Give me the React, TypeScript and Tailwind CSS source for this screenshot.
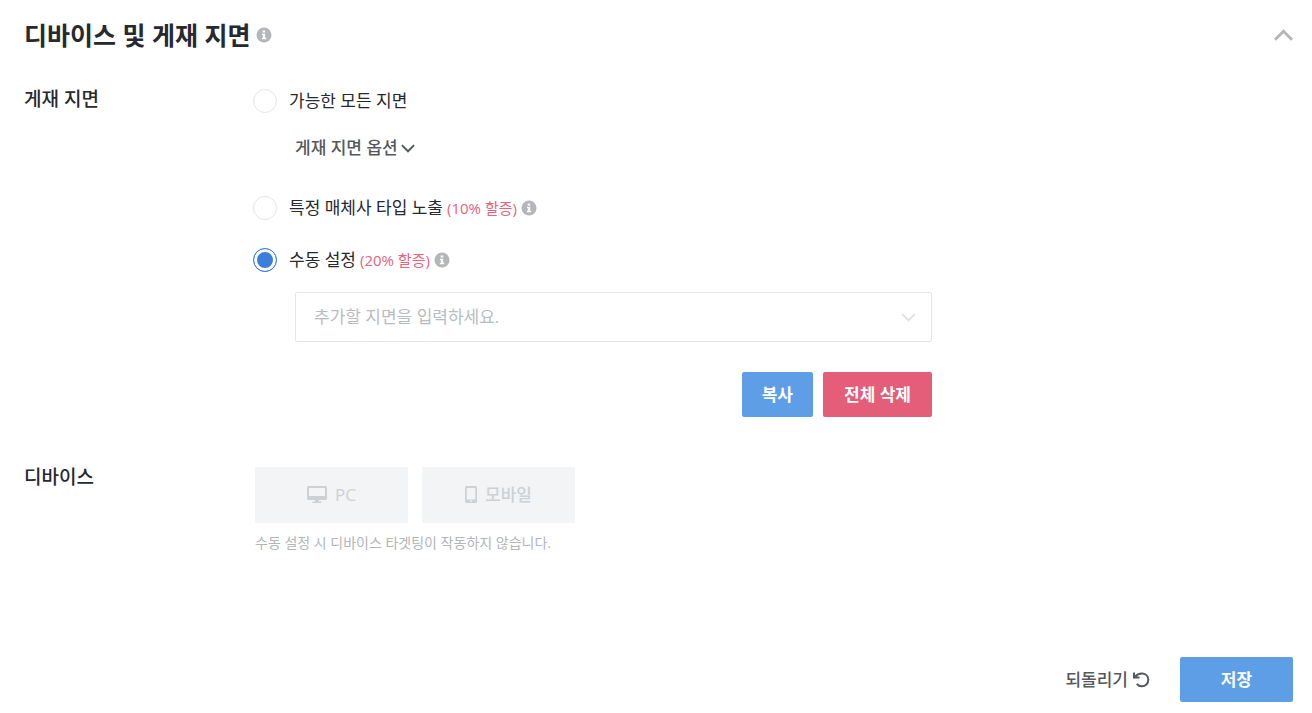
import { useState } from "react";

const placements = [
  { key: "all", label: "가능한 모든 지면" },
  { key: "media", label: "특정 매체사 타입 노출", extra: "(10% 할증)" },
  { key: "manual", label: "수동 설정", extra: "(20% 할증)" },
];

function InfoIcon() {
  return (
    <svg viewBox="0 0 16 16" className="h-4 w-4 shrink-0" role="img" aria-label="도움말">
      <circle cx="8" cy="8" r="7.5" fill="#b4b6b9" />
      <path d="M6.7 3.6h2.5v2H6.7zM6 6.7h3.2v4h1v1.6H5.9v-1.6h1V8.2H6z" fill="#fff" />
    </svg>
  );
}

function Chevron({ up, width, className }: { up?: boolean; width: number; className: string }) {
  return (
    <svg viewBox="0 0 16 10" className={className} fill="none" stroke="currentColor" strokeWidth={width}>
      <path d={up ? "M.8 9 8 1.8 15.2 9" : "M1 1.2 8 8.2l7-7"} />
    </svg>
  );
}

function DesktopIcon() {
  return (
    <svg viewBox="0 0 20 18" className="h-[18px] w-5" fill="currentColor">
      <path fillRule="evenodd" d="M1.5 0h17A1.5 1.5 0 0 1 20 1.5v11a1.5 1.5 0 0 1-1.5 1.5H12v1.6h2.5V17h-9v-1.4H8V14H1.5A1.5 1.5 0 0 1 0 12.5v-11A1.5 1.5 0 0 1 1.5 0zM2 2v8h16V2z" />
    </svg>
  );
}

function MobileIcon() {
  return (
    <svg viewBox="0 0 12 18" className="h-[18px] w-3" fill="currentColor">
      <path fillRule="evenodd" d="M1.5 0h9A1.5 1.5 0 0 1 12 1.5v14a1.5 1.5 0 0 1-1.5 1.5h-9A1.5 1.5 0 0 1 0 15.5v-14A1.5 1.5 0 0 1 1.5 0zM1.7 2v11.5h8.6V2zM5 14.5v1.3h2v-1.3z" />
    </svg>
  );
}

function UndoIcon() {
  return (
    <svg viewBox="0 0 18 18" className="h-[18px] w-[18px]" fill="none" stroke="currentColor" strokeWidth="2">
      <path d="M2 1.5v5h5.5M2.5 6.2C5 3.4 8 2.3 10.5 2.5c3.3.3 5.8 2.9 5.8 6.3 0 3.7-2.8 6.5-6.3 6.5-2.2 0-4-.9-5.2-2.5" />
    </svg>
  );
}

export default function App() {
  const [selected, setSelected] = useState("manual");
  const [keyword, setKeyword] = useState("");
  const [open, setOpen] = useState(true);

  return (
    <main className="bg-white pt-[15px] pr-[19px] pb-3 pl-6 font-['Open_Sans','Noto_Sans_CJK_KR',sans-serif] text-[17px] leading-6 text-[#26292e]">
      <header className="flex items-center justify-between">
        <div className="flex items-center gap-[6px]">
          <h2 className="text-[25px] leading-10 font-bold">디바이스 및 게재 지면</h2>
          <InfoIcon />
        </div>
        <button type="button" aria-label="접기" aria-expanded={open} onClick={() => setOpen(!open)} className="text-[#b5b5b5]">
          <Chevron up width={2.4} className="h-3 w-[19px]" />
        </button>
      </header>

      {open && (
        <>
          <section className="mt-[30px] flex">
            <h3 className="w-[229px] shrink-0 text-[19px] leading-7 font-medium">게재 지면</h3>
            <div className="w-full max-w-[679px]">
              {placements.map((item) => (
                <div key={item.key} className={item.key === "all" ? "mt-1" : item.key === "media" ? "mt-9" : "mt-7"}>
                  <div className="flex items-center gap-1">
                    <label className="flex items-center gap-3">
                      <input
                        type="radio"
                        name="placement"
                        checked={selected === item.key}
                        onChange={() => setSelected(item.key)}
                        className="h-6 w-6 shrink-0 appearance-none rounded-full border border-[#e6e6e6] bg-white checked:border-[#3d7edb] checked:bg-[#3d7edb] checked:shadow-[inset_0_0_0_3px_#fff]"
                      />
                      <span>
                        {item.label}
                        {item.extra && <span className="ml-1 text-[15px] leading-6 text-[#e8637c]">{item.extra}</span>}
                      </span>
                    </label>
                    {item.extra && <InfoIcon />}
                  </div>
                  {item.key === "all" && (
                    <button type="button" className="mt-[23px] ml-[42px] flex items-center gap-[3px] font-medium text-[#55585c]">
                      게재 지면 옵션
                      <Chevron width={2.2} className="h-[9px] w-[14px]" />
                    </button>
                  )}
                </div>
              ))}

              <div className="mt-5 ml-[42px] flex h-[50px] items-center rounded-xs border border-[#e4e6e8] pr-[15px] pl-[18px]">
                <input
                  type="text"
                  aria-label="추가할 지면"
                  placeholder="추가할 지면을 입력하세요."
                  value={keyword}
                  onChange={(e) => setKeyword(e.target.value)}
                  className="min-w-0 flex-1 outline-none placeholder:text-[#b9bcbf]"
                />
                <Chevron width={2.2} className="h-[9px] w-[15px] text-[#dfe1e3]" />
              </div>

              <div className="mt-[30px] flex justify-end gap-[10px] font-bold text-white">
                <button type="button" onClick={() => navigator.clipboard.writeText(keyword)} className="h-[45px] rounded-xs bg-[#5d9ee6] px-5">
                  복사
                </button>
                <button type="button" onClick={() => setKeyword("")} className="h-[45px] rounded-xs bg-[#e45d79] px-[21px]">
                  전체 삭제
                </button>
              </div>
            </div>
          </section>

          <section className="mt-[46px] flex">
            <h3 className="w-[231px] shrink-0 text-[19px] leading-7 font-medium">디바이스</h3>
            <div className="pt-1">
              <div className="flex gap-[14px] text-[#ced1d4]">
                <button type="button" disabled className="flex h-14 w-[153px] items-center justify-center gap-2 bg-[#f2f4f6]">
                  <DesktopIcon />
                  PC
                </button>
                <button type="button" disabled className="flex h-14 w-[153px] items-center justify-center gap-2 bg-[#f2f4f6] font-medium">
                  <MobileIcon />
                  모바일
                </button>
              </div>
              <p className="mt-2 text-sm leading-6 text-[#b3b5b8]">수동 설정 시 디바이스 타겟팅이 작동하지 않습니다.</p>
            </div>
          </section>
        </>
      )}

      <footer className="mt-[102px] flex items-center justify-end gap-[30px]">
        <button type="button" className="flex items-center gap-1 font-medium text-[#55585c]">
          되돌리기
          <UndoIcon />
        </button>
        <button type="button" className="h-[45px] w-[113px] rounded-xs bg-[#5d9ee6] font-bold text-white">
          저장
        </button>
      </footer>
    </main>
  );
}
